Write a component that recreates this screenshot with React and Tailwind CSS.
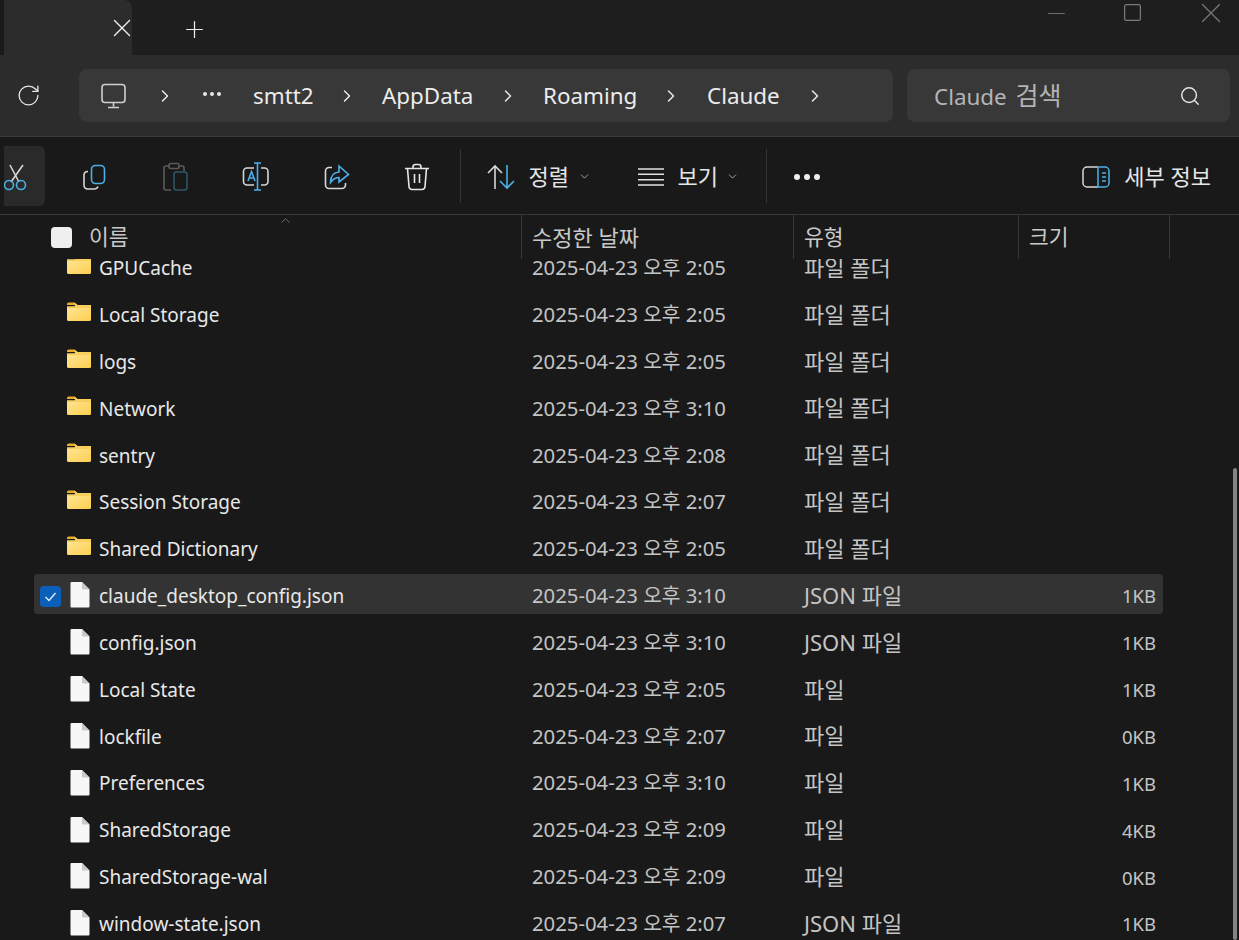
import { ChevronDown, ChevronRight, ChevronUp, Minus, Plus, RotateCw, Search, Square, X } from "lucide-react"

const rows = [
  { name: "GPUCache", date: "2025-04-23 오후 2:05", type: "파일 폴더", folder: true },
  { name: "Local Storage", date: "2025-04-23 오후 2:05", type: "파일 폴더", folder: true },
  { name: "logs", date: "2025-04-23 오후 2:05", type: "파일 폴더", folder: true },
  { name: "Network", date: "2025-04-23 오후 3:10", type: "파일 폴더", folder: true },
  { name: "sentry", date: "2025-04-23 오후 2:08", type: "파일 폴더", folder: true },
  { name: "Session Storage", date: "2025-04-23 오후 2:07", type: "파일 폴더", folder: true },
  { name: "Shared Dictionary", date: "2025-04-23 오후 2:05", type: "파일 폴더", folder: true },
  { name: "claude_desktop_config.json", date: "2025-04-23 오후 3:10", type: "JSON 파일", size: "1KB", selected: true },
  { name: "config.json", date: "2025-04-23 오후 3:10", type: "JSON 파일", size: "1KB" },
  { name: "Local State", date: "2025-04-23 오후 2:05", type: "파일", size: "1KB" },
  { name: "lockfile", date: "2025-04-23 오후 2:07", type: "파일", size: "0KB" },
  { name: "Preferences", date: "2025-04-23 오후 3:10", type: "파일", size: "1KB" },
  { name: "SharedStorage", date: "2025-04-23 오후 2:09", type: "파일", size: "4KB" },
  { name: "SharedStorage-wal", date: "2025-04-23 오후 2:09", type: "파일", size: "0KB" },
  { name: "window-state.json", date: "2025-04-23 오후 2:07", type: "JSON 파일", size: "1KB" },
]

const BLUE = "#4cb0e6"
const GREY = "#d6d6d6"

function FolderIcon() {
  return (
    <svg width="24" height="20" viewBox="0 0 24 20" className="shrink-0">
      <defs>
        <linearGradient id="folderBody" x1="0" y1="0" x2="1" y2="1">
          <stop offset="0" stopColor="#ffe596" />
          <stop offset="1" stopColor="#fbcf4f" />
        </linearGradient>
      </defs>
      <path d="M0 2a1.5 1.5 0 0 1 1.5-1.5h6L10.5 3H0z" fill="#e9ae2c" />
      <path d="M0 4.5h22.5A1.5 1.5 0 0 1 24 6v11.5a1.5 1.5 0 0 1-1.5 1.5h-21A1.5 1.5 0 0 1 0 17.5z" fill="url(#folderBody)" />
      <path d="M7.5 .5 10.5 3H24v3H0V4.5h8z" fill="#f8cf5c" />
    </svg>
  )
}

function FileIcon() {
  return (
    <svg width="20" height="26" viewBox="0 0 20 26" className="shrink-0">
      <path d="M1.5 0H12l7.5 7.5V24.5a1 1 0 0 1-1 1H1.5a1 1 0 0 1-1-1V1a1 1 0 0 1 1-1z" fill="#f7f7f7" />
      <path d="M12 0l7.5 7.5H13a1 1 0 0 1-1-1z" fill="#c9c9c9" />
    </svg>
  )
}

function ToolButton({ children }) {
  return <div className="w-[80.5px] h-[60px] flex items-center justify-center shrink-0">{children}</div>
}

function App() {
  return (
    <div className="w-[1239px] h-[940px] overflow-hidden relative bg-[#191919] text-[#e6e6e6] flex flex-col font-['Noto_Sans','Noto_Sans_CJK_KR',sans-serif]">
      {/* title bar */}
      <div className="h-[55px] flex bg-[#1e1e1e] shrink-0">
        <div className="w-[4px] bg-[#1a1a1a]" />
        <div className="w-[128px] bg-[#2c2c2c] rounded-tr-lg flex items-center justify-end">
          <X size={30} strokeWidth={1.1} className="-mr-[5px] text-[#f0f0f0]" />
        </div>
        <div className="flex-1 flex items-start">
          <Plus size={27} strokeWidth={1.1} className="ml-[49px] mt-[16px] text-[#ededed]" />
          <div className="flex-1" />
          <Minus size={27} strokeWidth={1} className="text-[#6d6d6d]" />
          <Square size={21} strokeWidth={1.4} className="ml-[52px] mt-[2px] text-[#7b7b7b]" />
          <X size={34} strokeWidth={0.9} className="ml-[51px] mr-[11px] -mt-[4px] text-[#777777]" />
        </div>
      </div>

      {/* address row */}
      <div className="h-[82px] bg-[#2c2c2c] border-b border-[#3a3a3a] shrink-0 flex items-start pt-[14px] pl-[4px]">
        <div className="w-[75px] h-[53px] flex items-center pl-[12px]">
          <RotateCw size={25} strokeWidth={1.3} className="text-[#e4e4e4]" />
        </div>
        <div className="w-[814px] h-[53px] bg-[#383838] rounded-lg flex items-center text-[22.4px] text-[#ececec]">
          <svg width="28" height="26" viewBox="0 0 28 26" fill="none" stroke="#cfcfcf" strokeWidth="1.6" className="ml-[21px] shrink-0">
            <rect x="2" y="1.5" width="23" height="18" rx="3" />
            <path d="M13.5 19.5v4M8 24.5h11" />
          </svg>
          <ChevronRight size={20} strokeWidth={1.7} className="ml-[27px]" />
          <span className="ml-[28px] w-[20px] flex gap-[3px] mb-[4px]">
            <i className="w-[4px] h-[4px] rounded-full bg-[#e8e8e8]" />
            <i className="w-[4px] h-[4px] rounded-full bg-[#e8e8e8]" />
            <i className="w-[4px] h-[4px] rounded-full bg-[#e8e8e8]" />
          </span>
          <span className="ml-[30px] w-[59px]">smtt2</span>
          <ChevronRight size={20} strokeWidth={1.7} className="ml-[25px]" />
          <span className="ml-[25px] w-[92px]">AppData</span>
          <ChevronRight size={20} strokeWidth={1.7} className="ml-[24px]" />
          <span className="ml-[25px] w-[94px]">Roaming</span>
          <ChevronRight size={20} strokeWidth={1.7} className="ml-[24px]" />
          <span className="ml-[26px] w-[72px]">Claude</span>
          <ChevronRight size={20} strokeWidth={1.7} className="ml-[26px]" />
        </div>
        <div className="ml-[14px] w-[323px] h-[53px] bg-[#383838] rounded-lg flex items-center pl-[27px] pr-[29px] text-[22.4px] text-[#b4b4b4]">
          <span className="flex-1">
            Claude <span className="ml-[3px] text-[25px]">검색</span>
          </span>
          <Search size={22} strokeWidth={1.6} className="text-[#e4e4e4]" />
        </div>
      </div>

      {/* toolbar */}
      <div className="h-[78px] bg-[#191919] border-b border-[#383838] shrink-0 flex items-center pl-[4px] pt-[2px] text-[22px] relative">
        <div className="w-[41px] h-[60px] -mt-[2px] bg-[#2a2a2a] rounded-r-md overflow-hidden flex items-center shrink-0">
          <svg width="30" height="30" viewBox="0 0 30 30" fill="none" strokeWidth="1.6" className="mt-[4px]">
            <path d="M6 2l9 17M19 2L7 19" stroke={GREY} />
            <circle cx="5" cy="22" r="4.500" stroke={BLUE} />
            <circle cx="17" cy="22" r="4.500" stroke={BLUE} />
          </svg>
        </div>
        <div className="w-[10px] shrink-0" />
        <ToolButton>
          <svg width="26" height="26" viewBox="0 0 26 26" fill="none" strokeWidth="1.6">
            <path d="M6 7.5C3 7.5 2 9 2 11v10c0 3 2 4 4 4h6c2 0 3.500-1 4-2.500" stroke={GREY} />
            <rect x="9.500" y="1.500" width="13" height="18" rx="4" stroke={BLUE} />
          </svg>
        </ToolButton>
        <ToolButton>
          <svg width="28" height="30" viewBox="0 0 28 30" fill="none" strokeWidth="1.6">
            <path d="M7 4H4a2 2 0 0 0-2 2v20a2 2 0 0 0 2 2h5M17 4h3a2 2 0 0 1 2 2v3" stroke="#5b5b5b" />
            <rect x="7" y="1.500" width="10" height="5" rx="1.500" stroke="#5b5b5b" />
            <rect x="12" y="10" width="13" height="18" rx="2.500" stroke="#2f5568" />
          </svg>
        </ToolButton>
        <ToolButton>
          <svg width="28" height="30" viewBox="0 0 28 30" fill="none" strokeWidth="1.6">
            <path d="M12 6H5a3.500 3.500 0 0 0-3.500 3.500v10A3.500 3.500 0 0 0 5 23h7M19 6h3.500A3.500 3.500 0 0 1 26 9.500v10a3.500 3.500 0 0 1-3.500 3.500H19" stroke={GREY} />
            <path d="M12 1h7M15.500 1v27M12 28h7M6 19l3.500-9.500L13 19M7 16h5" stroke={BLUE} />
          </svg>
        </ToolButton>
        <ToolButton>
          <svg width="26" height="26" viewBox="0 0 26 26" fill="none" strokeWidth="1.6">
            <path d="M8 3.500H5A3.500 3.500 0 0 0 1.500 7v14A3.500 3.500 0 0 0 5 24.500h13a3.500 3.500 0 0 0 3.500-3.500v-2" stroke={GREY} />
            <path d="M15 2l9.500 8.500L15 18v-4.500c-4 0-6 1.500-8.500 5 0-6 3-10 8.500-10.500z" stroke={BLUE} />
          </svg>
        </ToolButton>
        <ToolButton>
          <svg width="26" height="28" viewBox="0 0 26 28" fill="none" strokeWidth="1.6" stroke="#e6e6e6">
            <path d="M1 5.500h24M9 5.500V4a2.500 2.500 0 0 1 2.500-2.500h3A2.500 2.500 0 0 1 17 4v1.500M3.500 5.500l1.500 18a3 3 0 0 0 3 3h10a3 3 0 0 0 3-3l1.500-18M10.500 11v9M15.500 11v9" />
          </svg>
        </ToolButton>
        <div className="w-[1px] h-[54px] bg-[#333333] ml-[2px] -mt-[2px] shrink-0" />
        <svg width="28" height="26" viewBox="0 0 28 26" fill="none" strokeWidth="1.6" className="ml-[26px] shrink-0">
          <path d="M8 25V2M1 9l7-7 7 7" stroke={GREY} />
          <path d="M20 1v23M13 17l7 7 7-7" stroke={BLUE} />
        </svg>
        <span className="ml-[14px] w-[40px] whitespace-nowrap">정렬</span>
        <ChevronDown size={13} strokeWidth={1.6} className="ml-[9px] text-[#b5b5b5]" />
        <svg width="28" height="20" viewBox="0 0 28 20" fill="none" stroke="#e0e0e0" strokeWidth="1.4" className="ml-[46px] shrink-0">
          <path d="M1 2h26M1 7.300h26M1 12.700h26M1 18h26" />
        </svg>
        <span className="ml-[13px] w-[40px] whitespace-nowrap">보기</span>
        <ChevronDown size={13} strokeWidth={1.6} className="ml-[8px] text-[#b5b5b5]" />
        <div className="w-[1px] h-[54px] bg-[#333333] ml-[27px] -mt-[2px] shrink-0" />
        <span className="ml-[27px] flex gap-[4px]">
          <i className="w-[6px] h-[6px] rounded-full bg-[#f0f0f0]" />
          <i className="w-[6px] h-[6px] rounded-full bg-[#f0f0f0]" />
          <i className="w-[6px] h-[6px] rounded-full bg-[#f0f0f0]" />
        </span>
        <div className="flex-1" />
        <svg width="28" height="22" viewBox="0 0 28 22" fill="none" strokeWidth="1.5" className="shrink-0">
          <path d="M16 1H5a4 4 0 0 0-4 4v12a4 4 0 0 0 4 4h11" stroke="#d8d8d8" />
          <path d="M16 1h7a4 4 0 0 1 4 4v12a4 4 0 0 1-4 4h-7zM20 7h4M20 11h4M20 15h4" stroke={BLUE} />
        </svg>
        <span className="ml-[14px] mr-[28px] whitespace-nowrap">세부 정보</span>
      </div>

      {/* column headers */}
      <div className="h-[44px] shrink-0 flex text-[21.5px] text-[#c9c9c9] relative z-10 bg-[#191919]">
        <div className="w-[522px] flex items-center pl-[51px] relative border-r border-[#383838]">
          <div className="w-[21px] h-[21px] bg-[#efefef] rounded-[4px]" />
          <span className="ml-[17px]">이름</span>
          <ChevronUp size={15} strokeWidth={1.2} className="absolute left-[278px] -top-[2px] text-[#8c8c8c]" />
        </div>
        <div className="w-[272px] pl-[10px] flex items-center border-r border-[#383838] text-[22px]">수정한 날짜</div>
        <div className="w-[225px] pl-[10px] flex items-center border-r border-[#383838]">유형</div>
        <div className="w-[151px] pl-[10px] flex items-center border-r border-[#383838]">크기</div>
      </div>

      {/* file list */}
      <div className="flex-1 overflow-hidden pl-[34px]">
        <div className="-mt-[14px]">
          {rows.map((row) => (
            <div key={row.name} className="w-[1129px] h-[46.85px] flex items-center">
              <div className={`w-full h-[40px] mb-[4px] pt-[4px] flex items-center rounded-sm ${row.selected ? "bg-[#333333]" : ""}`}>
                <div className="w-[33px] flex justify-end shrink-0">
                  {row.selected && (
                    <div className="w-[21px] h-[21px] bg-[#0c5fb8] rounded-[4px] flex items-center justify-center mr-[6px]">
                      <svg width="13" height="13" viewBox="0 0 13 13" fill="none" stroke="#e8f2fc" strokeWidth="1.3">
                        <path d="M1.500 7l3.500 3.500L11.500 3" />
                      </svg>
                    </div>
                  )}
                </div>
                <div className={`w-[32px] shrink-0 flex justify-center ${row.folder ? "-translate-x-[4px] -translate-y-[3px]" : "-translate-x-[3px] -translate-y-[1px]"}`}>
                  {row.folder ? <FolderIcon /> : <FileIcon />}
                </div>
                <span className="w-[433px] text-[19px] text-[#e8e8e8] whitespace-nowrap">{row.name}</span>
                <span className="w-[272px] text-[20.3px] text-[#c4c4c4] whitespace-nowrap -translate-y-[1px]">{row.date}</span>
                <span className="w-[262px] text-[22px] text-[#c4c4c4] whitespace-nowrap -translate-y-[1px]">{row.type}</span>
                <span className="w-[90px] text-[18.5px] text-right text-[#c4c4c4] whitespace-nowrap">{row.size}</span>
              </div>
            </div>
          ))}
        </div>
      </div>

      {/* scrollbar thumb over the list */}
      <div className="absolute right-[2px] top-[468px] bottom-0 w-[4px] rounded-full bg-[#858585]" />
    </div>
  )
}

export default App
